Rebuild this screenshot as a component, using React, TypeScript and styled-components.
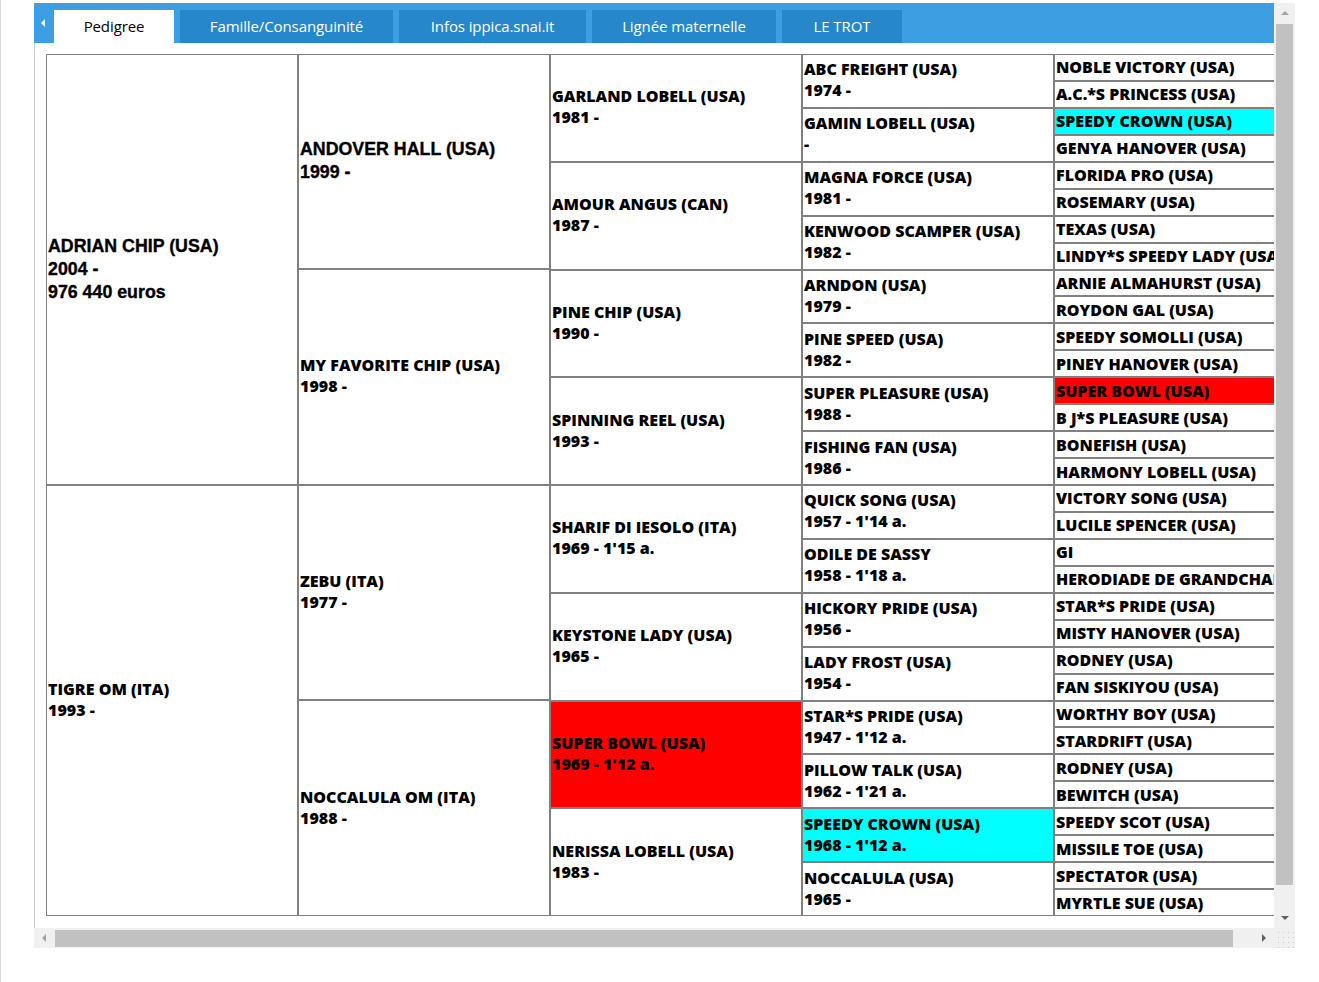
import React from "react";
import styled, { createGlobalStyle } from "styled-components";

const GlobalStyle = createGlobalStyle`
  *, *::before, *::after { box-sizing: border-box; }
  html, body { margin: 0; padding: 0; background: #ffffff; }
  body { font-family: "Open Sans", "Noto Sans", sans-serif; color: #000; }
`;

type Horse = { lines: string[]; bg?: "red" | "cyan"; big?: boolean };

const generations: Horse[][] = [
  [
    { lines: ["ADRIAN CHIP (USA)", "2004 -", "976 440 euros"], big: true },
    { lines: ["TIGRE OM (ITA)", "1993 -"] },
  ],
  [
    { lines: ["ANDOVER HALL (USA)", "1999 -"], big: true },
    { lines: ["MY FAVORITE CHIP (USA)", "1998 -"] },
    { lines: ["ZEBU (ITA)", "1977 -"] },
    { lines: ["NOCCALULA OM (ITA)", "1988 -"] },
  ],
  [
    { lines: ["GARLAND LOBELL (USA)", "1981 -"] },
    { lines: ["AMOUR ANGUS (CAN)", "1987 -"] },
    { lines: ["PINE CHIP (USA)", "1990 -"] },
    { lines: ["SPINNING REEL (USA)", "1993 -"] },
    { lines: ["SHARIF DI IESOLO (ITA)", "1969 - 1'15 a."] },
    { lines: ["KEYSTONE LADY (USA)", "1965 -"] },
    { lines: ["SUPER BOWL (USA)", "1969 - 1'12 a."], bg: "red" },
    { lines: ["NERISSA LOBELL (USA)", "1983 -"] },
  ],
  [
    { lines: ["ABC FREIGHT (USA)", "1974 -"] },
    { lines: ["GAMIN LOBELL (USA)", "-"] },
    { lines: ["MAGNA FORCE (USA)", "1981 -"] },
    { lines: ["KENWOOD SCAMPER (USA)", "1982 -"] },
    { lines: ["ARNDON (USA)", "1979 -"] },
    { lines: ["PINE SPEED (USA)", "1982 -"] },
    { lines: ["SUPER PLEASURE (USA)", "1988 -"] },
    { lines: ["FISHING FAN (USA)", "1986 -"] },
    { lines: ["QUICK SONG (USA)", "1957 - 1'14 a."] },
    { lines: ["ODILE DE SASSY", "1958 - 1'18 a."] },
    { lines: ["HICKORY PRIDE (USA)", "1956 -"] },
    { lines: ["LADY FROST (USA)", "1954 -"] },
    { lines: ["STAR*S PRIDE (USA)", "1947 - 1'12 a."] },
    { lines: ["PILLOW TALK (USA)", "1962 - 1'21 a."] },
    { lines: ["SPEEDY CROWN (USA)", "1968 - 1'12 a."], bg: "cyan" },
    { lines: ["NOCCALULA (USA)", "1965 -"] },
  ],
  [
    "NOBLE VICTORY (USA)",
    "A.C.*S PRINCESS (USA)",
    "SPEEDY CROWN (USA)",
    "GENYA HANOVER (USA)",
    "FLORIDA PRO (USA)",
    "ROSEMARY (USA)",
    "TEXAS (USA)",
    "LINDY*S SPEEDY LADY (USA)",
    "ARNIE ALMAHURST (USA)",
    "ROYDON GAL (USA)",
    "SPEEDY SOMOLLI (USA)",
    "PINEY HANOVER (USA)",
    "SUPER BOWL (USA)",
    "B J*S PLEASURE (USA)",
    "BONEFISH (USA)",
    "HARMONY LOBELL (USA)",
    "VICTORY SONG (USA)",
    "LUCILE SPENCER (USA)",
    "GI",
    "HERODIADE DE GRANDCHAMP",
    "STAR*S PRIDE (USA)",
    "MISTY HANOVER (USA)",
    "RODNEY (USA)",
    "FAN SISKIYOU (USA)",
    "WORTHY BOY (USA)",
    "STARDRIFT (USA)",
    "RODNEY (USA)",
    "BEWITCH (USA)",
    "SPEEDY SCOT (USA)",
    "MISSILE TOE (USA)",
    "SPECTATOR (USA)",
    "MYRTLE SUE (USA)",
  ].map((name, i): Horse => ({
    lines: [name],
    bg: i === 2 ? "cyan" : i === 12 ? "red" : undefined,
  })),
];

const tabs = [
  { label: "Pedigree", width: 120, active: true },
  { label: "Famille/Consanguinité", width: 213 },
  { label: "Infos ippica.snai.it", width: 187 },
  { label: "Lignée maternelle", width: 184 },
  { label: "LE TROT", width: 120 },
];

const Page = styled.div`
  height: 982px;
  border-left: 1px solid #d6d6d6;
  padding: 3px 0 0 33px;
`;

const Frame = styled.div`
  display: grid;
  grid-template-columns: 1240px 21px;
  grid-template-rows: 925px 20px;
  width: 1261px;
`;

const Viewport = styled.div`
  display: flex;
  flex-direction: column;
  min-width: 0;
  overflow: hidden;
`;

const TabBar = styled.div`
  flex: none;
  height: 40px;
  background: #3d9fe1;
  display: flex;
  align-items: flex-end;
  gap: 6px;
`;

const ArrowSlot = styled.div`
  width: 14px;
  align-self: stretch;
  display: flex;
  align-items: center;
  padding-left: 7px;
`;

const Triangle = styled.span<{ $dir: "left" | "right" | "up" | "down"; $color: string; $size?: number }>`
  width: 0;
  height: 0;
  ${({ $dir, $color, $size = 4 }) => {
    const t = `${$size}px solid transparent`;
    const c = `${$size}px solid ${$color}`;
    if ($dir === "left") return `border-top:${t};border-bottom:${t};border-right:${c};`;
    if ($dir === "right") return `border-top:${t};border-bottom:${t};border-left:${c};`;
    if ($dir === "up") return `border-left:${t};border-right:${t};border-bottom:${c};`;
    return `border-left:${t};border-right:${t};border-top:${c};`;
  }}
`;

const Tab = styled.div<{ $active?: boolean; $w: number }>`
  flex: none;
  width: ${(p) => p.$w}px;
  height: 33px;
  display: flex;
  align-items: center;
  justify-content: center;
  font-family: "Open Sans", "Noto Sans", sans-serif;
  font-size: 15px;
  letter-spacing: -0.1px;
  color: ${(p) => (p.$active ? "#000" : "#fff")};
  background: ${(p) => (p.$active ? "#ffffff" : "#2787cb")};
  padding-bottom: 2px;
`;

const Body = styled.div`
  flex: 1;
  min-height: 0;
  border-left: 1px solid #c9c9c9;
  padding: 11px 0 0 11px;
  overflow: hidden;
`;

const Tree = styled.div`
  display: flex;
  height: 862px;
  width: 1260px;
`;

const Column = styled.div`
  flex: none;
  width: 252px;
  display: flex;
  flex-direction: column;
`;

const Cell = styled.div<{ $bg?: string; $single?: boolean }>`
  flex: 1 1 0;
  min-height: 0;
  border: 1px solid #808080;
  background: ${(p) => (p.$bg === "red" ? "#ff0000" : p.$bg === "cyan" ? "#00ffff" : "#ffffff")};
  display: flex;
  flex-direction: column;
  justify-content: center;
  padding: ${(p) => (p.$single ? "1px 0 0 1px" : "0 0 1px 1px")};
  overflow: hidden;
  white-space: nowrap;
  font-family: "Open Sans", "Noto Sans", sans-serif;
  font-weight: 800;
  font-size: 16px;
  line-height: 21px;
`;

const LeadCell = styled(Cell)`
  font-family: "Liberation Sans", Arial, sans-serif;
  font-weight: 700;
  font-size: 17.8px;
  line-height: 23px;
  padding: 0 0 0 1px;
  -webkit-text-stroke: 0.35px #000;
`;

const VScroll = styled.div`
  background: #f0f0f0;
  display: flex;
  flex-direction: column;
  align-items: center;
`;

const HScroll = styled.div`
  background: #f0f0f0;
  display: flex;
  align-items: center;
`;

const ScrollButton = styled.div<{ $vertical?: boolean }>`
  flex: none;
  width: ${(p) => (p.$vertical ? "100%" : "20px")};
  height: ${(p) => (p.$vertical ? "20px" : "100%")};
  display: flex;
  align-items: center;
  justify-content: center;
`;

const VThumb = styled.div`
  width: 17px;
  height: 861px;
  margin-top: 1px;
  background: #c1c1c1;
`;

const HThumb = styled.div`
  height: 17px;
  width: 1178px;
  margin-left: 1px;
  background: #c1c1c1;
`;

const Spacer = styled.div`
  flex: 1;
`;

const Corner = styled.div`
  background-color: #f0f0f0;
  background-image: radial-gradient(circle, #c8c8c8 0.8px, transparent 1px);
  background-size: 5px 5px;
  background-position: 2px 2px;
`;

export default function App() {
  return (
    <>
      <GlobalStyle />
      <Page>
        <Frame>
          <Viewport>
            <TabBar>
              <ArrowSlot>
                <Triangle $dir="left" $color="#ffffff" />
              </ArrowSlot>
              {tabs.map((t) => (
                <Tab key={t.label} $active={t.active} $w={t.width}>
                  {t.label}
                </Tab>
              ))}
            </TabBar>
            <Body>
              <Tree>
                {generations.map((gen, g) => (
                  <Column key={g}>
                    {gen.map((h, i) => {
                      const C = h.big ? LeadCell : Cell;
                      return (
                        <C key={i} $bg={h.bg} $single={h.lines.length === 1}>
                          {h.lines.map((l, k) => (
                            <div key={k}>{l}</div>
                          ))}
                        </C>
                      );
                    })}
                  </Column>
                ))}
              </Tree>
            </Body>
          </Viewport>
          <VScroll>
            <ScrollButton $vertical>
              <Triangle $dir="up" $color="#a3a3a3" />
            </ScrollButton>
            <VThumb />
            <Spacer />
            <ScrollButton $vertical>
              <Triangle $dir="down" $color="#606060" />
            </ScrollButton>
          </VScroll>
          <HScroll>
            <ScrollButton>
              <Triangle $dir="left" $color="#a3a3a3" />
            </ScrollButton>
            <HThumb />
            <Spacer />
            <ScrollButton>
              <Triangle $dir="right" $color="#606060" />
            </ScrollButton>
          </HScroll>
          <Corner />
        </Frame>
      </Page>
    </>
  );
}
